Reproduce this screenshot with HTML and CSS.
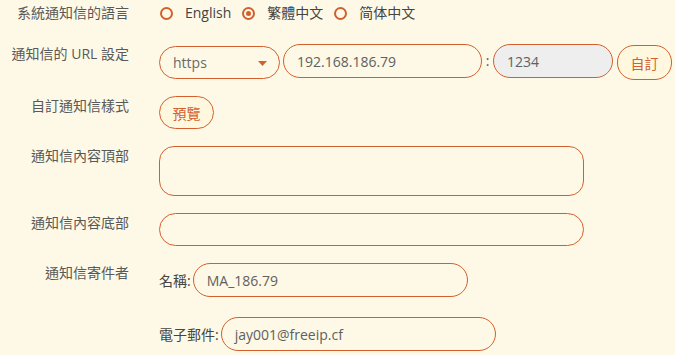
FILE: index.html
```html
<!DOCTYPE html>
<html lang="zh-Hant">
<head>
<meta charset="utf-8">
<link rel="stylesheet" href="styles.css">
</head>
<body>
<div class="form">
  <div class="row row-lang">
    <div class="label">系統通知信的語言</div>
    <div class="field radios">
      <label class="radio"><span class="dot"></span><span class="rtext">English</span></label>
      <label class="radio checked"><span class="dot"></span><span class="rtext">繁體中文</span></label>
      <label class="radio"><span class="dot"></span><span class="rtext">简体中文</span></label>
    </div>
  </div>

  <div class="row row-url">
    <div class="label">通知信的 URL 設定</div>
    <div class="field url">
      <div class="select pill">
        <span>https</span>
        <svg class="caret" width="9" height="5" viewBox="0 0 9 5"><path d="M0 0h9L4.5 5z" fill="#d2602e"/></svg>
      </div>
      <div class="pill input ip">192.168.186.79</div>
      <span class="colon">:</span>
      <div class="pill input port">1234</div>
      <button class="btn custom">自訂</button>
    </div>
  </div>

  <div class="row">
    <div class="label">自訂通知信樣式</div>
    <div class="field"><button class="btn preview">預覽</button></div>
  </div>

  <div class="row">
    <div class="label">通知信內容頂部</div>
    <div class="field"><div class="textarea"></div></div>
  </div>

  <div class="row">
    <div class="label">通知信內容底部</div>
    <div class="field"><div class="pill input wide"></div></div>
  </div>

  <div class="row">
    <div class="label">通知信寄件者</div>
    <div class="field sender">
      <div class="sub"><span class="sublabel">名稱:</span><div class="pill input name">MA_186.79</div></div>
      <div class="sub"><span class="sublabel">電子郵件:</span><div class="pill input name">jay001@freeip.cf</div></div>
    </div>
  </div>
</div>
</body>
</html>
```

FILE: styles.css
```css
html, body {
  margin: 0;
  padding: 0;
  background: #fef9e6;
}
body {
  font-family: "Open Sans", "Noto Sans CJK TC", sans-serif;
  font-size: 14px;
  color: #555;
  width: 675px;
  height: 355px;
  overflow: hidden;
}
.form {
  display: flex;
  flex-direction: column;
  gap: 17px;
  padding-top: 3px;
}
.row {
  display: grid;
  grid-template-columns: 129px 1fr;
  column-gap: 30px;
  align-items: start;
}
.row-lang { margin-bottom: 4px; }
.row-url { margin-bottom: -1px; }
.label {
  text-align: right;
  line-height: 20px;
  font-size: 14px;
  color: #595959;
  white-space: nowrap;
}
.field { display: flex; align-items: center; }
.radios { height: 20px; }
.radio {
  display: flex;
  align-items: center;
  margin-right: 10px;
  color: #444;
}
.dot {
  width: 9px;
  height: 9px;
  border: 2px solid #d2602e;
  border-radius: 50%;
  margin: 0 12px 0 1px;
  position: relative;
}
.radio.checked .dot::after {
  content: "";
  position: absolute;
  left: 2px;
  top: 2px;
  width: 5px;
  height: 5px;
  border-radius: 50%;
  background: #d2602e;
}
.rtext { line-height: 20px; }
.pill {
  box-sizing: border-box;
  border: 1.5px solid #d2602e;
  border-radius: 17px;
  height: 34px;
  display: flex;
  align-items: center;
  padding: 0 13px;
  color: #606060;
  background: transparent;
}
.url { align-items: flex-start; }
.select {
  width: 121px;
  height: 33px;
  margin-top: 2px;
  justify-content: space-between;
  padding-right: 12px;
  color: #6a6a6a;
}
.caret { margin-top: 1px; }
.ip { width: 199px; margin-left: 3px; }
.colon { width: 11px; line-height: 34px; text-align: center; color: #555; }
.port { width: 120px; background: #eeeeee; }
.btn {
  box-sizing: border-box;
  font-family: inherit;
  font-size: 14px;
  border: 1.5px solid #d2602e;
  border-radius: 17px;
  background: #fff8df;
  color: #d2602e;
  height: 34px;
  padding: 0;
}
.custom { width: 55px; margin-left: 4px; height: 35px; margin-top: 1px; }
.preview { width: 55px; height: 33px; }
.textarea {
  box-sizing: border-box;
  width: 425px;
  height: 50px;
  border: 1.5px solid #d2602e;
  border-radius: 15px;
}
.wide { width: 425px; height: 33px; }
.sender { flex-direction: column; align-items: flex-start; gap: 20px; }
.sub { display: flex; align-items: center; }
.sublabel { color: #444; margin-right: 2px; }
.name { width: 275px; }
```
